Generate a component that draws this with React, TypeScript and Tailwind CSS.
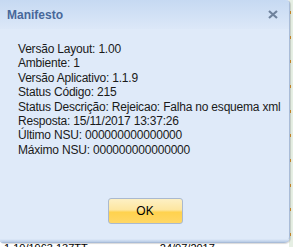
import { useState } from 'react'

const lines = [
  'Versão Layout: 1.00',
  'Ambiente: 1',
  'Versão Aplicativo: 1.1.9',
  'Status Código: 215',
  'Status Descrição: Rejeicao: Falha no esquema xml',
  'Resposta: 15/11/2017 13:37:26',
  'Último NSU: 000000000000000',
  'Máximo NSU: 000000000000000',
]

export default function App() {
  const [open, setOpen] = useState(true)

  return (
    <div className="relative w-[293px] h-[247px] overflow-hidden bg-white font-['Liberation_Sans',Arial,sans-serif]">
      {/* grid behind the dialog */}
      <div className="absolute left-0 top-[243px] flex gap-[72px] pl-[4px] text-[11px] leading-none text-black">
        <span>1.10/1963 137TT</span>
        <span>24/07/2017</span>
      </div>
      <div className="absolute right-0 top-0 flex h-full w-[4px] flex-col justify-around bg-[#e6efe4]">
        {Array.from({ length: 10 }).map((_, i) => (
          <div key={i} className="h-[3px] w-[2px] bg-[#e0962e]" />
        ))}
      </div>

      {open && (
        <div className="absolute left-0 top-0 flex h-[243px] w-[290px] flex-col rounded-tr-[4px] rounded-br-[6px] rounded-bl-[3px] border-r border-b border-[#a9bcd8] bg-[#dfeaf9] shadow-[1px_1px_1px_rgba(0,0,0,0.15)]">
          <div className="flex h-[29px] items-center justify-between rounded-tr-[4px] bg-gradient-to-b from-[#c6d9f2] to-[#dce8f8] pl-[7px] pr-[11px]">
            <span className="text-[12px] font-bold text-[#48689a]">Manifesto</span>
            <button
              onClick={() => setOpen(false)}
              className="text-[#6f829c]"
            >
              <svg width="10" height="9" viewBox="0 0 10 9">
                <path d="M1 1 L9 8 M9 1 L1 8" stroke="currentColor" strokeWidth="2.2" />
              </svg>
            </button>
          </div>

          <div className="flex flex-col pl-[18px] pt-[13px] text-[12px] leading-[14.4px] tracking-[-0.2px] text-[#1a1a1a]">
            {lines.map((l) => (
              <div key={l} className="whitespace-nowrap">{l}</div>
            ))}
          </div>

          <div className="flex flex-1 items-end justify-center pb-[15px] pl-[1px]">
            <button
              onClick={() => setOpen(false)}
              className="flex h-[26px] w-[75px] items-center justify-center rounded-[3px] border border-[#aab9cf] bg-[linear-gradient(to_bottom,#fdf0c4_0%,#fde6a0_45%,#ffd24e_55%,#ffd765_100%)] text-[12px] text-black"
            >
              OK
            </button>
          </div>
          <div className="h-[3px] rounded-b-[6px] bg-gradient-to-b from-[#dfeaf9] to-[#b9cce6]" />
        </div>
      )}
    </div>
  )
}
